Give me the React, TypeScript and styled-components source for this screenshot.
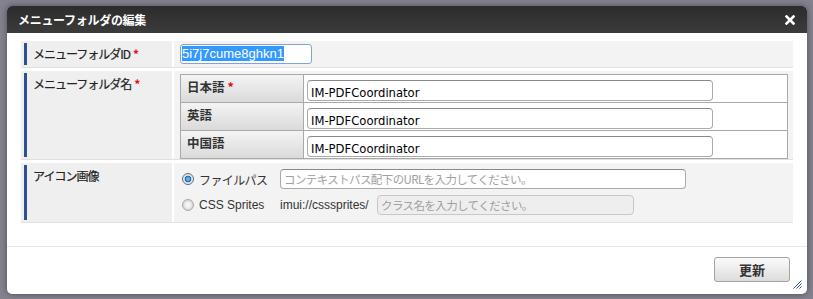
import styled, { createGlobalStyle } from 'styled-components';

const GlobalStyle = createGlobalStyle`
  html, body {
    margin: 0;
    padding: 0;
    background: #83828e;
    font-family: "Noto Sans CJK JP", "DejaVu Sans", sans-serif;
  }
`;

const Page = styled.div`
  height: 299px;
  padding: 6px 0 0 7px;
  box-sizing: border-box;
  overflow: hidden;
`;

const Dialog = styled.div`
  position: relative;
  width: 800px;
  height: 288px;
  background: #fff;
  border-radius: 5px;
  box-shadow: 0 0 6px rgba(30, 30, 40, 0.55);
  display: flex;
  flex-direction: column;
`;

const TitleBar = styled.div`
  height: 27px;
  flex-shrink: 0;
  display: flex;
  align-items: center;
  justify-content: space-between;
  padding: 0 12px 0 11px;
  border-radius: 5px 5px 0 0;
  background: linear-gradient(#2c2c2c, #3b3b3b);
  color: #fff;
  font-size: 12px;
  font-weight: bold;
  letter-spacing: -0.3px;
`;

const Body = styled.div`
  flex: 1;
  padding: 8px 14px 0;
`;

const FormRow = styled.div`
  display: grid;
  grid-template-columns: 151px 1fr;
  column-gap: 2px;
  border-bottom: 1px solid #e0e0e0;
  margin-bottom: 3px;
`;

const LabelCell = styled.div`
  display: flex;
  background: #efefef;
  padding: 2px 0 2px 3px;
`;

const LabelBar = styled.div`
  flex: 1;
  border-left: 3px solid #2d4f93;
  padding: 3px 0 0 6px;
  font-size: 12px;
  line-height: 15px;
  color: #222;
  letter-spacing: -1px;
  -webkit-text-stroke: 0.2px #222;
`;

const Req = styled.span`
  color: #e01010;
  margin-left: 3px;
  font-weight: bold;
  letter-spacing: 0;
  -webkit-text-stroke: 0;
`;

const ValueCell = styled.div<{ $pad: string }>`
  background: #f3f3f3;
  padding: ${p => p.$pad};
`;

const SelectedBox = styled.div`
  width: 132px;
  height: 20px;
  box-sizing: border-box;
  border: 1px solid #7fa3d2;
  border-radius: 3px;
  background: #fff;
  padding: 1px 0 0 1px;
  font-family: "Liberation Sans", Arial, sans-serif;
  font-size: 13px;
  line-height: 16px;
`;

const Selection = styled.span`
  background: #3399ff;
  color: #fff;
`;

const LangTable = styled.div`
  display: grid;
  grid-template-columns: 122px 1fr;
  gap: 1px;
  background: #a9a9a9;
  border: 1px solid #a9a9a9;
`;

const LangLabel = styled.div`
  height: 27px;
  box-sizing: border-box;
  padding: 2px 6px 0;
  background: linear-gradient(#f4f4f4, #dadada);
  font-size: 12.5px;
  font-weight: bold;
  color: #333;
`;

const LangValue = styled.div`
  height: 27px;
  box-sizing: border-box;
  padding: 3px 3px;
  background: #fff;
`;

const TextBox = styled.input<{ $w: number; $h: number }>`
  width: ${p => p.$w}px;
  height: ${p => p.$h}px;
  box-sizing: border-box;
  margin: 0;
  padding: 5px 3px 0;
  border: 1px solid #aaa;
  border-top-color: #8a8a8a;
  border-radius: 4px;
  background: #fff;
  font-family: "DejaVu Sans", Tahoma, sans-serif;
  font-size: 11.6px;
  line-height: 14px;
  color: #000;
  outline: none;
  &::placeholder {
    color: #a0a0a0;
    font-family: "Noto Sans CJK JP", sans-serif;
    font-size: 11.5px;
    letter-spacing: -0.6px;
  }
  &:disabled {
    background: #eeeeee;
    border-color: #c8c8c8;
  }
`;

const PlainBox = styled(TextBox)`
  padding-top: 1px;
`;

const OptionList = styled.div`
  display: flex;
  flex-direction: column;
  gap: 6px;
`;

const OptionLine = styled.div`
  display: flex;
  align-items: center;
  height: 20px;
`;

const RadioOption = styled.div`
  width: 98px;
  display: flex;
  align-items: center;
  gap: 5px;
  font-size: 12px;
  color: #333;
  letter-spacing: -0.6px;
`;

const Radio = styled.span<{ $on?: boolean }>`
  width: 12px;
  height: 12px;
  border-radius: 50%;
  box-sizing: border-box;
  border: 1px solid ${p => (p.$on ? '#5f6b78' : '#a9a9a9')};
  background: ${p =>
    p.$on
      ? 'radial-gradient(circle, #58b2f0 0 1.5px, #1a5f9e 3px, #dadada 3.6px, #f2f2f2 5px)'
      : 'radial-gradient(circle, #f4f4f4 2px, #d6d6d6 5px)'};
  flex-shrink: 0;
`;

const LatinText = styled.span<{ $w?: number }>`
  font-family: "Liberation Sans", Arial, sans-serif;
  font-size: 12px;
  letter-spacing: 0;
  color: #333;
  width: ${p => (p.$w ? `${p.$w}px` : 'auto')};
`;

const Footer = styled.div`
  height: 48px;
  flex-shrink: 0;
  box-sizing: border-box;
  border-top: 1px solid #e6e6e6;
  display: flex;
  justify-content: flex-end;
  padding: 10px 17px 0;
`;

const Button = styled.button`
  width: 76px;
  height: 25px;
  border: 1px solid #a3a3a3;
  border-radius: 3px;
  background: linear-gradient(#fbfbfb, #dcdcdc);
  font-family: "Noto Sans CJK JP", sans-serif;
  font-size: 13px;
  font-weight: bold;
  color: #333;
  padding: 0;
`;

const Grip = styled.svg`
  position: absolute;
  right: 5px;
  bottom: 5px;
`;

const langs = [
  { name: '日本語', required: true },
  { name: '英語', required: false },
  { name: '中国語', required: false },
];

export default function App() {
  return (
    <>
      <GlobalStyle />
      <Page>
        <Dialog>
          <TitleBar>
            <span>メニューフォルダの編集</span>
            <svg width="10" height="10" viewBox="0 0 10 10">
              <path d="M1.5 1.5 L8.5 8.5 M8.5 1.5 L1.5 8.5" stroke="#fff" strokeWidth="2.6" strokeLinecap="square" />
            </svg>
          </TitleBar>
          <Body>
            <FormRow>
              <LabelCell>
                <LabelBar>
                  メニューフォルダID<Req>*</Req>
                </LabelBar>
              </LabelCell>
              <ValueCell $pad="3px 6px">
                <SelectedBox>
                  <Selection>5i7j7cume8ghkn1</Selection>
                </SelectedBox>
              </ValueCell>
            </FormRow>
            <FormRow>
              <LabelCell>
                <LabelBar>
                  メニューフォルダ名<Req>*</Req>
                </LabelBar>
              </LabelCell>
              <ValueCell $pad="3px 5px 0 6px">
                <LangTable>
                  {langs.map(l => (
                    <>
                      <LangLabel key={l.name + '-l'}>
                        {l.name}
                        {l.required && <Req>*</Req>}
                      </LangLabel>
                      <LangValue key={l.name + '-v'}>
                        <TextBox $w={406} $h={21} readOnly value="IM-PDFCoordinator" />
                      </LangValue>
                    </>
                  ))}
                </LangTable>
              </ValueCell>
            </FormRow>
            <FormRow>
              <LabelCell>
                <LabelBar>アイコン画像</LabelBar>
              </LabelCell>
              <ValueCell $pad="6px 8px 7px">
                <OptionList>
                  <OptionLine>
                    <RadioOption>
                      <Radio $on />
                      ファイルパス
                    </RadioOption>
                    <PlainBox $w={406} $h={20} placeholder="コンテキストパス配下のURLを入力してください。" />
                  </OptionLine>
                  <OptionLine>
                    <RadioOption>
                      <Radio />
                      <LatinText>CSS Sprites</LatinText>
                    </RadioOption>
                    <LatinText $w={97}>imui://csssprites/</LatinText>
                    <PlainBox $w={257} $h={20} disabled placeholder="クラス名を入力してください。" />
                  </OptionLine>
                </OptionList>
              </ValueCell>
            </FormRow>
          </Body>
          <Footer>
            <Button>更新</Button>
          </Footer>
          <Grip width="10" height="10" viewBox="0 0 10 10">
            <path d="M9.5 1.5 L1.5 9.5 M9.5 4.5 L4.5 9.5 M9.5 7.5 L7.5 9.5" stroke="#2a5a9c" strokeWidth="1" />
          </Grip>
        </Dialog>
      </Page>
    </>
  );
}
